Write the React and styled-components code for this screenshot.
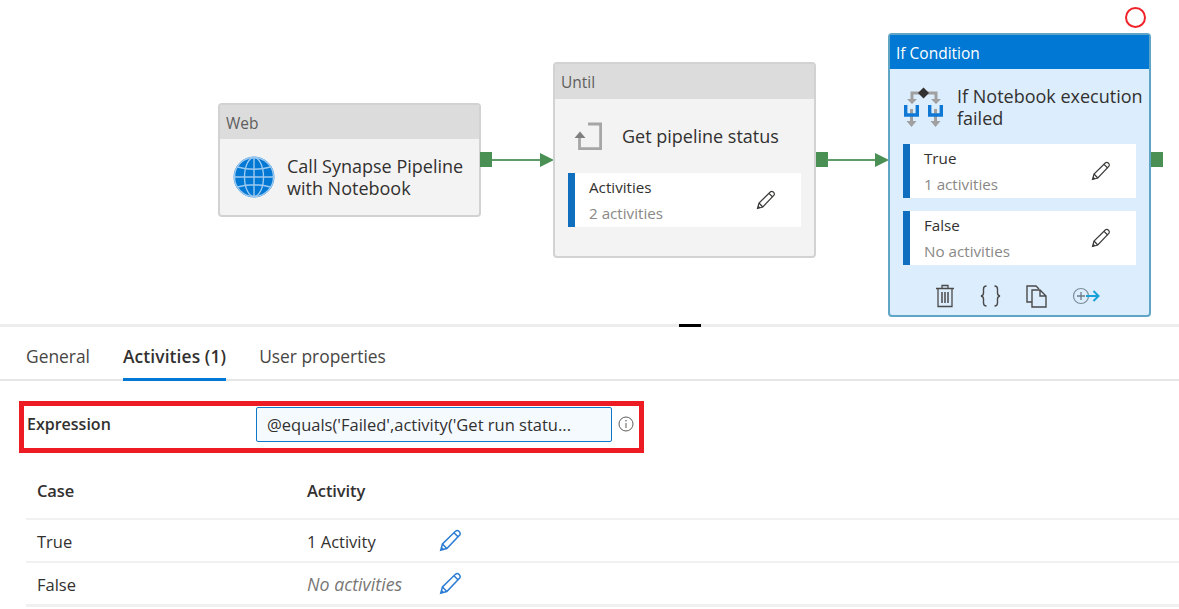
import styled, { createGlobalStyle } from "styled-components";

const GlobalStyle = createGlobalStyle`
  html, body {
    margin: 0;
    padding: 0;
    background: #fff;
    overflow: hidden;
    font-family: "Open Sans", "Noto Sans", sans-serif;
    color: #323130;
  }
`;

const Page = styled.div`
  width: 1179px;
  height: 609px;
`;

/* diagram canvas: nodes sit at their place on the canvas */
const Canvas = styled.div`
  position: relative;
  height: 324px;
`;

const Node = styled.div`
  position: absolute;
  left: ${(p) => p.$x}px;
  top: ${(p) => p.$y}px;
  width: 263px;
  height: ${(p) => p.$h}px;
  box-sizing: border-box;
  border: 2px solid ${(p) => (p.$active ? "#5fa6c6" : "#d2d2d2")};
  border-radius: 4px;
  background: ${(p) => (p.$active ? "#dcedfd" : "#f3f3f3")};
`;

const NodeHeader = styled.div`
  height: ${(p) => p.$h}px;
  box-sizing: border-box;
  display: flex;
  align-items: center;
  padding: 1px 0 0 6px;
  font-size: 15.5px;
  background: ${(p) => (p.$active ? "#0078d4" : "#dcdcdc")};
  color: ${(p) => (p.$active ? "#fff" : "#605e5c")};
`;

const NodeTitleRow = styled.div`
  display: flex;
  align-items: center;
  height: ${(p) => p.$h}px;
  padding-left: ${(p) => p.$pad}px;
  gap: ${(p) => p.$gap}px;
`;

const NodeTitle = styled.div`
  font-size: 18px;
  line-height: 22px;
  color: #323130;
  white-space: nowrap;
`;

const SubCard = styled.div`
  display: flex;
  align-items: center;
  justify-content: space-between;
  box-sizing: border-box;
  width: 233px;
  height: 54px;
  margin: 0 0 13px 13px;
  padding: 0 25px 0 14px;
  background: #fff;
  border-left: 7px solid #106ebe;
`;

const SubLabel = styled.div`
  font-size: 15.2px;
  line-height: 26px;
  color: #323130;
`;

const SubCount = styled.div`
  font-size: 15.2px;
  line-height: 26px;
  color: #8a8886;
`;

const NodeToolbar = styled.div`
  display: flex;
  align-items: center;
  gap: 25px;
  padding: 6px 0 0 45px;
`;

const Connector = styled.div`
  position: absolute;
  left: ${(p) => p.$x}px;
  top: ${(p) => p.$y}px;
  width: 12px;
  height: 15px;
  background: #4a8f53;
`;

const Link = styled.svg`
  position: absolute;
  left: ${(p) => p.$x}px;
  top: ${(p) => p.$y}px;
`;

const Marker = styled.div`
  position: absolute;
  left: 1125px;
  top: 7px;
  width: 21px;
  height: 21px;
  box-sizing: border-box;
  border: 2px solid #f0232b;
  border-radius: 50%;
`;

const Splitter = styled.div`
  height: 3px;
  background: #ededed;
  display: flex;
  padding-left: 679px;
`;

const SplitterHandle = styled.div`
  width: 22px;
  height: 3px;
  background: #000;
`;

const Tabs = styled.div`
  display: flex;
  gap: 33px;
  height: 54px;
  box-sizing: border-box;
  padding-left: 26px;
  border-bottom: 2px solid #e6e6e6;
`;

const Tab = styled.div`
  height: 54px;
  box-sizing: border-box;
  padding-top: 18px;
  line-height: 22px;
  font-size: 17.4px;
  font-weight: ${(p) => (p.$active ? 600 : 400)};
  letter-spacing: ${(p) => (p.$active ? "0.1px" : "0")};
  color: ${(p) => (p.$active ? "#323130" : "#484644")};
  border-bottom: 3px solid ${(p) => (p.$active ? "#0078d4" : "transparent")};
`;

const Highlight = styled.div`
  display: flex;
  align-items: center;
  box-sizing: border-box;
  width: 625px;
  height: 52px;
  margin: 20px 0 0 19px;
  padding: 0 0 6px 3px;
  border: 5px solid #ed1c24;
`;

const FieldLabel = styled.div`
  width: 229px;
  font-size: 16px;
  font-weight: 600;
  color: #323130;
`;

const ExpressionBox = styled.div`
  display: flex;
  align-items: center;
  box-sizing: border-box;
  width: 356px;
  height: 35px;
  padding-left: 10px;
  font-size: 16.5px;
  background: #f5faff;
  border: 1px solid #0f78c8;
  border-radius: 2px;
  color: #323130;
  white-space: nowrap;
`;

const InfoWrap = styled.div`
  display: flex;
  margin-left: 6px;
`;

const CaseTable = styled.div`
  margin: 18px 0 0 26px;
`;

const Row = styled.div`
  display: grid;
  grid-template-columns: 270px 132px 40px;
  align-items: center;
  height: ${(p) => p.$h}px;
  padding: 0 0 ${(p) => p.$lift || 0}px 11px;
  border-bottom: ${(p) => (p.$last ? "3px solid #f0f0f0" : "2px solid #f1f1f1")};
  box-sizing: border-box;
`;

const HeadCell = styled.div`
  font-size: 16.5px;
  font-weight: 600;
  letter-spacing: -0.1px;
  color: #323130;
`;

const Cell = styled.div`
  font-size: ${(p) => (p.$muted ? "17.8px" : "16.5px")};
  padding-top: 1px;
  font-style: ${(p) => (p.$muted ? "italic" : "normal")};
  color: ${(p) => (p.$muted ? "#797775" : "#323130")};
`;

const Pencil = ({ size = 20, color = "#3b3a39", width = 1.2 }) => (
  <svg width={size} height={size} viewBox="0 0 20 20" fill="none" stroke={color} strokeWidth={width}>
    <path d="M1.5 18.5 L3 13 L14.5 1.8 Q16 0.8 17.5 2.2 Q19 3.8 18 5.2 L6.8 17 Z" />
    <path d="M3 13 L6.8 17 M13 3.3 L16.7 7" />
    <path d="M1.5 18.5 L4.5 17.7 L2.3 15.5 Z" fill={color} stroke="none" />
  </svg>
);

const GlobeIcon = () => (
  <svg width="42" height="42" viewBox="0 0 42 42" fill="none">
    <circle cx="21" cy="21" r="20" fill="#0078d4" stroke="#3f98e0" strokeWidth="1" />
    <g stroke="#9cc9f0" strokeWidth="1.4">
      <circle cx="21" cy="21" r="19.5" />
      <ellipse cx="21" cy="21" rx="9.5" ry="19.5" />
      <path d="M21 1.5 V40.5 M1.5 21 H40.5 M4.5 11 Q21 15.5 37.5 11 M4.5 31 Q21 26.5 37.5 31" />
    </g>
  </svg>
);

const UntilIcon = () => (
  <svg width="28" height="30" viewBox="0 0 28 30" fill="none">
    <path d="M14 3 H26.6 V27.6 H5.5 V16" stroke="#a6a6a6" strokeWidth="2.8" />
    <path d="M0.5 17 L6 10.5 L11.5 17 Z" fill="#7f7f7f" />
  </svg>
);

const IfIcon = () => (
  <svg width="40" height="40" viewBox="0 0 40 40" fill="none">
    <path d="M9 13 V6 H33 V13" stroke="#a0a0a0" strokeWidth="3" />
    <path d="M4 12 H14 L9 17 Z M28 12 H38 L33 17 Z" fill="#a0a0a0" />
    <path d="M20.5 0.5 L26 6 L20.5 11.5 L15 6 Z" fill="#323130" />
    <path d="M8.5 22 V36 M32.5 22 V36" stroke="#a0a0a0" strokeWidth="3" />
    <path d="M3.5 34 H13.5 L8.5 40 Z M27.5 34 H37.5 L32.5 40 Z" fill="#a0a0a0" />
    <path d="M2.7 18 V28 H14.3 V18 M26.7 18 V28 H38.3 V18" stroke="#0f78d4" strokeWidth="3.4" />
  </svg>
);

const TrashIcon = () => (
  <svg width="20" height="24" viewBox="0 0 20 24" fill="none" stroke="#4a4a4a" strokeWidth="1.3">
    <path d="M1 4.5 H19 M7 4.5 V1.5 H13 V4.5 M3 4.5 V22.5 H17 V4.5" />
    <path d="M7 8 V19 M10 8 V19 M13 8 V19" strokeWidth="1.5" />
  </svg>
);

const BracesIcon = () => (
  <svg width="21" height="22" viewBox="0 0 21 22" fill="none" stroke="#4a4a4a" strokeWidth="1.4">
    <path d="M6.5 1 Q3.5 1 3.5 4 V8 Q3.5 10.5 1 11 Q3.5 11.5 3.5 14 V18 Q3.5 21 6.5 21" />
    <path d="M14.5 1 Q17.5 1 17.5 4 V8 Q17.5 10.5 20 11 Q17.5 11.5 17.5 14 V18 Q17.5 21 14.5 21" />
  </svg>
);

const CopyIcon = () => (
  <svg width="21" height="23" viewBox="0 0 21 23" fill="none" stroke="#4a4a4a" strokeWidth="1.4">
    <path d="M6 17 H1 V1 H10 L13 4" />
    <path d="M6 5 H14 L20 11 V22 H6 Z M14 5 V11 H20" fill="#dcedfd" />
  </svg>
);

const AddOutputIcon = () => (
  <svg width="28" height="18" viewBox="0 0 28 18" fill="none">
    <circle cx="9" cy="9" r="7.5" stroke="#7d8d99" strokeWidth="1.2" />
    <path d="M5 9 H13 M9 5 V13" stroke="#6c7b86" strokeWidth="1.3" />
    <path d="M14 9 H26 M21.5 4 L26.5 9 L21.5 14" stroke="#1aa0d8" strokeWidth="2" />
  </svg>
);

const InfoIcon = () => (
  <svg width="16" height="16" viewBox="0 0 16 16" fill="none">
    <circle cx="8" cy="8" r="7" stroke="#605e5c" strokeWidth="1" />
    <path d="M8 7 V12" stroke="#605e5c" strokeWidth="1" />
    <circle cx="8" cy="4.8" r="0.8" fill="#605e5c" />
  </svg>
);

const Arrow = ({ x, y, w }) => (
  <Link $x={x} $y={y} width={w} height="16" viewBox={`0 0 ${w} 16`}>
    <path d={`M0 8 H${w - 13}`} stroke="#5f9c67" strokeWidth="2" />
    <path d={`M${w - 14} 1 L${w} 8 L${w - 14} 15 Z`} fill="#4a8f53" />
  </Link>
);

const Activity = ({ label, count }) => (
  <SubCard>
    <div>
      <SubLabel>{label}</SubLabel>
      <SubCount>{count}</SubCount>
    </div>
    <Pencil />
  </SubCard>
);

export default function App() {
  return (
    <Page>
      <GlobalStyle />
      <Canvas>
        <Node $x={218} $y={103} $h={114}>
          <NodeHeader $h={34}>Web</NodeHeader>
          <NodeTitleRow $h={76} $pad={13} $gap={12}>
            <GlobeIcon />
            <NodeTitle>
              Call Synapse Pipeline
              <br />
              with Notebook
            </NodeTitle>
          </NodeTitleRow>
        </Node>
        <Connector $x={480} $y={152} />
        <Arrow x={492} y={152} w={62} />

        <Node $x={553} $y={62} $h={196}>
          <NodeHeader $h={35}>Until</NodeHeader>
          <NodeTitleRow $h={74} $pad={19} $gap={20}>
            <UntilIcon />
            <NodeTitle>Get pipeline status</NodeTitle>
          </NodeTitleRow>
          <Activity label="Activities" count="2 activities" />
        </Node>
        <Connector $x={816} $y={152} />
        <Arrow x={827} y={152} w={62} />

        <Node $active $x={888} $y={33} $h={284}>
          <NodeHeader $active $h={34}>If Condition</NodeHeader>
          <NodeTitleRow $h={75} $pad={13} $gap={14}>
            <IfIcon />
            <NodeTitle>
              If Notebook execution
              <br />
              failed
            </NodeTitle>
          </NodeTitleRow>
          <Activity label="True" count="1 activities" />
          <Activity label="False" count="No activities" />
          <NodeToolbar>
            <TrashIcon />
            <BracesIcon />
            <CopyIcon />
            <AddOutputIcon />
          </NodeToolbar>
        </Node>
        <Connector $x={1151} $y={152} />
        <Marker />
      </Canvas>

      <Splitter>
        <SplitterHandle />
      </Splitter>

      <Tabs>
        <Tab>General</Tab>
        <Tab $active>Activities (1)</Tab>
        <Tab>User properties</Tab>
      </Tabs>

      <Highlight>
        <FieldLabel>Expression</FieldLabel>
        <ExpressionBox>@equals('Failed',activity('Get run statu...</ExpressionBox>
        <InfoWrap>
          <InfoIcon />
        </InfoWrap>
      </Highlight>

      <CaseTable>
        <Row $h={49} $lift={8}>
          <HeadCell>Case</HeadCell>
          <HeadCell>Activity</HeadCell>
        </Row>
        <Row $h={43}>
          <Cell>True</Cell>
          <Cell>1 Activity</Cell>
          <Pencil size={23} color="#2b7cd3" width={1.3} />
        </Row>
        <Row $h={44} $last>
          <Cell>False</Cell>
          <Cell $muted>No activities</Cell>
          <Pencil size={23} color="#2b7cd3" width={1.3} />
        </Row>
      </CaseTable>
    </Page>
  );
}
